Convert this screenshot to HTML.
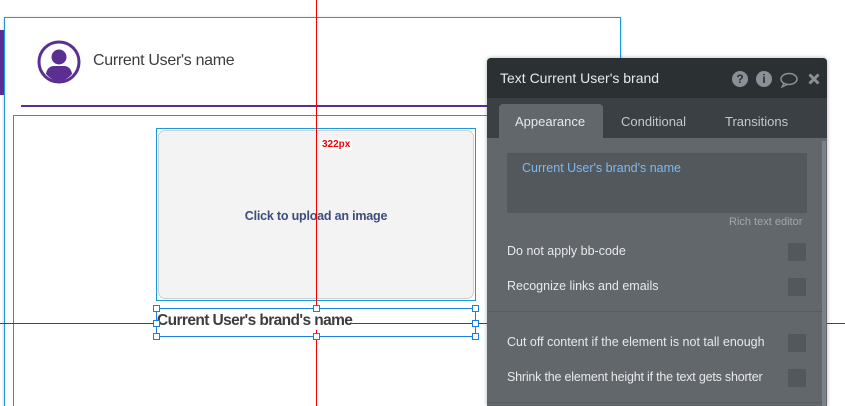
<!DOCTYPE html>
<html><head><meta charset="utf-8"><style>
*{margin:0;padding:0;box-sizing:border-box}
html,body{width:845px;height:406px;overflow:hidden}
body{background:#fff;position:relative;font-family:"Liberation Sans",sans-serif}
.a{position:absolute}
.h{width:7px;height:7px;border:1px solid #1a7fe0;background:#fff;position:absolute}
.row{position:absolute;left:20px;color:#e8e9ea;font-size:12.5px}
.cb{position:absolute;left:301px;width:18px;height:18px;background:#53585c}
</style></head><body>
<div class="a" style="left:4px;top:17px;width:617px;height:389px;border:1px solid #1a9ad6;border-bottom:none;box-shadow:0 1px 3px rgba(0,0,0,.25)"></div>
<div class="a" style="left:0;top:30px;width:4px;height:65px;background:#5b2f91"></div>
<svg class="a" style="left:37px;top:40px" width="44" height="44" viewBox="0 0 44 44"><circle cx="22" cy="22" r="20" fill="#fff" stroke="#5b2f91" stroke-width="3"/><circle cx="22" cy="17" r="7.5" fill="#5b2f91"/><path d="M9 34 Q10 27 16 26 L28 26 Q34 27 35 34 Q29 41 22 41 Q15 41 9 34Z" fill="#5b2f91"/></svg>
<div class="a" style="left:93px;top:52px;font-size:16px;color:#3d3d3d;letter-spacing:-0.3px">Current User's name</div>
<div class="a" style="left:21px;top:105px;width:600px;height:2px;background:#5b2f91"></div>
<div class="a" style="left:13px;top:115px;width:620px;height:291px;border:1px solid #1a9ad6;border-bottom:none"></div>
<div class="a" style="left:156px;top:128px;width:320px;height:173px;border:1px solid #1a9ad6"></div>
<div class="a" style="left:158px;top:130px;width:316px;height:169px;background:#f3f3f3;border:1px solid #d0d0d0;border-radius:7px"></div>
<div class="a" style="left:156px;top:209px;width:320px;text-align:center;font-size:12.5px;color:#3d4d7d;font-weight:bold;letter-spacing:-0.2px">Click to upload an image</div>
<div class="a" style="left:0;top:323px;width:845px;height:1px;background:#e00"></div>
<div class="a" style="left:316px;top:0;width:1px;height:406px;background:#e00"></div>
<div class="a" style="left:320px;top:139px;background:#fff;color:#e00;font-size:10px;font-weight:bold;padding:0 2px">322px</div>
<div class="a" style="left:156px;top:308px;width:320px;height:29px;border:1px solid #1a7fe0;background:transparent"></div>
<div class="a" style="left:157px;top:312px;font-size:15.5px;color:#3d3d3d;background:#fff;font-weight:bold;letter-spacing:-0.6px">Current User's brand's name</div>
<div class="h" style="left:153px;top:305px"></div><div class="h" style="left:313px;top:305px"></div><div class="h" style="left:472px;top:305px"></div>
<div class="h" style="left:153px;top:320px"></div><div class="h" style="left:472px;top:320px"></div>
<div class="h" style="left:153px;top:333px"></div><div class="h" style="left:313px;top:333px"></div><div class="h" style="left:472px;top:333px"></div>
<div class="a" style="left:487px;top:58px;width:340px;height:348px;background:#62676b;border-radius:4px 4px 0 0;overflow:hidden;box-shadow:0 0 4px rgba(0,0,0,.3)">
 <div class="a" style="left:0;top:0;width:340px;height:40px;background:#2b3033"></div>
 <div class="a" style="left:13px;top:12px;color:#e8e9ea;font-size:14px">Text Current User's brand</div>
 <div class="a" style="left:245px;top:13px;width:16px;height:16px;border-radius:50%;background:#8a9095;color:#2b3033;font-size:12px;font-weight:bold;text-align:center;line-height:16px">?</div>
 <div class="a" style="left:269px;top:13px;width:16px;height:16px;border-radius:50%;background:#8a9095;color:#2b3033;font-size:12px;font-weight:bold;text-align:center;line-height:16px">i</div>
 <svg class="a" style="left:293px;top:14px" width="18" height="16"><ellipse cx="9" cy="7" rx="8" ry="5.5" fill="none" stroke="#8a9095" stroke-width="1.5"/><path d="M4 11 L2 15 L8 12" fill="none" stroke="#8a9095" stroke-width="1.3"/></svg>
 <svg class="a" style="left:321px;top:15px" width="12" height="12"><path d="M1.5 1.5L10.5 10.5M10.5 1.5L1.5 10.5" stroke="#8a9095" stroke-width="3"/></svg>
 <div class="a" style="left:0;top:40px;width:340px;height:40px;background:#3b4044"></div>
 <div class="a" style="left:12px;top:46px;width:104px;height:34px;background:#62676b;border-radius:4px 4px 0 0"></div>
 <div class="a" style="left:28px;top:56px;color:#e8e9ea;font-size:13px">Appearance</div>
 <div class="a" style="left:134px;top:56px;color:#c5c8ca;font-size:13px">Conditional</div>
 <div class="a" style="left:238px;top:56px;color:#c5c8ca;font-size:13px">Transitions</div>
 <div class="a" style="left:335px;top:83px;width:4px;height:265px;background:#7d8286"></div>
 <div class="a" style="left:20px;top:95px;width:300px;height:60px;background:#53585c"></div>
 <div class="a" style="left:35px;top:103px;color:#7fb8ef;font-size:12.5px">Current User's brand's name</div>
 <div class="a" style="left:242px;top:158px;color:#a3a7aa;font-size:11px">Rich text editor</div>
 <div class="row" style="top:186px">Do not apply bb-code</div><div class="cb" style="top:185px"></div>
 <div class="row" style="top:221px">Recognize links and emails</div><div class="cb" style="top:220px"></div>
 <div class="a" style="left:0;top:253px;width:335px;height:1px;background:#585d61"></div>
 <div class="row" style="top:277px">Cut off content if the element is not tall enough</div><div class="cb" style="top:276px"></div>
 <div class="row" style="top:312px;letter-spacing:-0.2px">Shrink the element height if the text gets shorter</div><div class="cb" style="top:311px"></div>
 <div class="a" style="left:0;top:344px;width:335px;height:1px;background:#585d61"></div>
</div>
</body></html>
